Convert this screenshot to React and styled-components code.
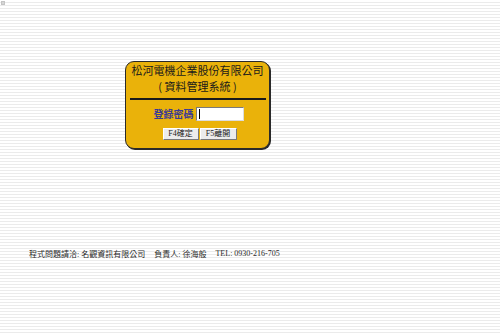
import React from 'react';
import styled, { createGlobalStyle } from 'styled-components';

const GlobalStyle = createGlobalStyle`
  html, body {
    margin: 0;
    padding: 0;
  }
  body {
    width: 500px;
    height: 335px;
    overflow: hidden;
    font-family: "Liberation Serif", "Noto Sans CJK TC", serif;
    background-color: #ffffff;
    background-image: repeating-linear-gradient(
      to bottom,
      #ffffff 0px,
      #ffffff 2px,
      #ebebeb 2px,
      #ebebeb 3px
    );
  }
`;

const Page = styled.div`
  width: 500px;
  height: 335px;
  display: flex;
  flex-direction: column;
`;

const Marker = styled.span`
  display: block;
  width: 4px;
  height: 4px;
  margin: 1px 0 0 1px;
  background: #d6d6d6;
  border: 1px solid #c4c4c4;
  box-sizing: border-box;
`;

const Stage = styled.div`
  padding: 56px 0 0 125px;
`;

const Card = styled.div`
  width: 145px;
  height: 88px;
  box-sizing: border-box;
  background: #eab20a;
  border: 1px solid #2a2a2a;
  border-radius: 9px;
  box-shadow: 1px 1px 0 #2a2a2a;
  display: flex;
  flex-direction: column;
  align-items: center;
`;

const Title = styled.div`
  font-family: "Noto Sans CJK TC", serif;
  font-size: 11px;
  line-height: 16px;
  color: #1a1a1a;
  text-align: center;
  white-space: nowrap;
`;

const Divider = styled.div`
  width: 136px;
  height: 1.5px;
  background: #1a1a1a;
  margin: 4px 0 7px;
`;

const Row = styled.div`
  display: flex;
  align-items: center;
  gap: ${props => props.gap || "2px"};
  margin-top: ${props => props.mt || "0"};
  margin-left: ${props => props.ml || "0"};
`;

const Label = styled.span`
  font-family: "Noto Sans CJK TC", serif;
  font-weight: bold;
  font-size: 10px;
  line-height: 14px;
  color: #3a3a96;
  white-space: nowrap;
`;

const Field = styled.div`
  width: 48px;
  height: 14px;
  box-sizing: border-box;
  background: #ffffff;
  border: 1px solid #7a7a7a;
  border-right-color: #dcdcdc;
  border-bottom-color: #dcdcdc;
  display: flex;
  align-items: center;
  padding-left: 2px;
`;

const Caret = styled.span`
  width: 1px;
  height: 10px;
  background: #000;
`;

const Button = styled.div`
  width: ${props => props.w || "36px"};
  height: 12px;
  box-sizing: border-box;
  background: #ececec;
  border: 1px solid #ffffff;
  border-right-color: #7a7a7a;
  border-bottom-color: #7a7a7a;
  font-family: "Liberation Serif", "Noto Sans CJK TC", serif;
  font-size: 8px;
  line-height: 10px;
  color: #222;
  text-align: center;
  white-space: nowrap;
`;

const Footer = styled.div`
  display: flex;
  align-items: center;
  gap: 9px;
  padding-left: 29px;
  margin-top: 99px;
  font-family: "Liberation Serif", "Noto Sans CJK TC", serif;
  font-size: 8px;
  color: #2a2a2a;
  white-space: nowrap;
`;

export default function App() {
  return (
    <Page>
      <GlobalStyle />
      <Marker />
      <Stage>
        <Card>
          <Title>松河電機企業股份有限公司</Title>
          <Title>( 資料管理系統 )</Title>
          <Divider />
          <Row gap="2px" ml="2px">
            <Label>登錄密碼</Label>
            <Field><Caret /></Field>
          </Row>
          <Row gap="1px" mt="7px" ml="4px">
            <Button>F4確定</Button>
            <Button w="37px">F5離開</Button>
          </Row>
        </Card>
      </Stage>
      <Footer>
        <span>程式問題請洽: 名觀資訊有限公司</span>
        <span>負責人: 徐海般</span>
        <span>TEL: 0930-216-705</span>
      </Footer>
    </Page>
  );
}
